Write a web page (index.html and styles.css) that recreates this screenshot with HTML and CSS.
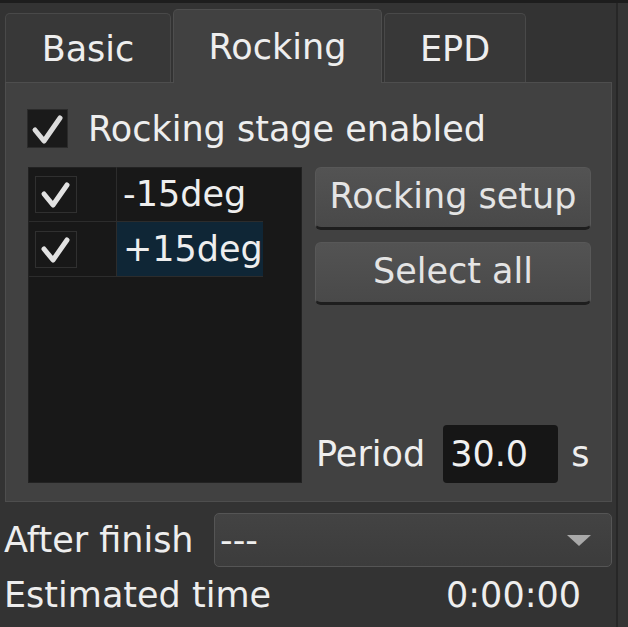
FILE: index.html
```html
<!DOCTYPE html>
<html>
<head>
<meta charset="utf-8">
<link rel="stylesheet" href="styles.css">
</head>
<body>
<div class="window">
  <div class="main">
    <div class="tabs">
      <div class="tab tab-basic">Basic</div>
      <div class="tab tab-rocking active">Rocking</div>
      <div class="tab tab-epd">EPD</div>
    </div>
    <div class="pane">
      <div class="check-row">
        <span class="checkbox big">
          <svg width="41" height="39" viewBox="0 0 41 39"><path d="M8 21 L17 32 L33 9" fill="none" stroke="#dcdcdc" stroke-width="5" stroke-linecap="round" stroke-linejoin="round"/></svg>
        </span>
        <span class="check-label">Rocking stage enabled</span>
      </div>
      <div class="pane-body">
        <div class="list">
          <div class="row">
            <div class="cell cell-check">
              <span class="checkbox small">
                <svg width="41" height="37" viewBox="0 0 41 37"><path d="M9 18 L18 29 L32 9" fill="none" stroke="#e2e2e2" stroke-width="5" stroke-linecap="round" stroke-linejoin="round"/></svg>
              </span>
            </div>
            <div class="cell cell-text">-15deg</div>
          </div>
          <div class="row">
            <div class="cell cell-check">
              <span class="checkbox small">
                <svg width="41" height="37" viewBox="0 0 41 37"><path d="M9 18 L18 29 L32 9" fill="none" stroke="#e2e2e2" stroke-width="5" stroke-linecap="round" stroke-linejoin="round"/></svg>
              </span>
            </div>
            <div class="cell cell-text selected">+15deg</div>
          </div>
        </div>
        <div class="side">
          <div class="button">Rocking setup</div>
          <div class="button">Select all</div>
          <div class="period">
            <span class="period-label">Period</span>
            <span class="input">30.0</span>
            <span class="unit">s</span>
          </div>
        </div>
      </div>
    </div>
    <div class="form-row finish-row">
      <span class="form-label">After finish</span>
      <div class="combo">
        <span class="combo-text">---</span>
        <span class="combo-arrow"></span>
      </div>
    </div>
    <div class="form-row time-row">
      <span class="form-label">Estimated time</span>
      <span class="time-value">0:00:00</span>
    </div>
  </div>
  <div class="right-strip"></div>
</div>
</body>
</html>
```

FILE: styles.css
```css
* { box-sizing: border-box; }
html, body {
  margin: 0;
  padding: 0;
  background: #333333;
}
body {
  font-family: "DejaVu Sans", "Liberation Sans", sans-serif;
  font-size: 35px;
  color: #eeeeee;
}
.window {
  width: 628px;
  height: 627px;
  display: flex;
  border-top: 3px solid #1d1d1d;
  background: #333333;
  overflow: hidden;
}
.main {
  width: 616px;
  padding: 0 4px 0 5px;
  display: flex;
  flex-direction: column;
}
.right-strip {
  flex: 1;
  border-left: 2px solid #272727;
  background: #353535;
}
.tabs {
  margin-top: 6px;
  height: 73px;
  display: flex;
  align-items: flex-end;
  gap: 2px;
}
.tab {
  height: 69px;
  display: flex;
  align-items: center;
  justify-content: center;
  padding-top: 2px;
  line-height: 40px;
  background: #383838;
  border: 1px solid #494949;
  border-bottom: none;
  border-radius: 5px 5px 0 0;
}
.tab-basic { width: 166px; }
.tab-rocking { width: 209px; }
.tab-epd { width: 142px; }
.tab.active {
  height: 74px;
  margin-bottom: -1px;
  padding-top: 0;
  background: #414141;
  border-color: #4e4e4e;
  position: relative;
  z-index: 1;
}
.pane {
  height: 420px;
  background: #414141;
  border: 1px solid #4e4e4e;
  padding: 26px 20px 18px 21px;
  display: flex;
  flex-direction: column;
}
.check-row {
  height: 39px;
  display: flex;
  align-items: center;
  gap: 20px;
  line-height: 40px;
}
.checkbox {
  display: block;
  background: #1a1a1a;
  border: 1px solid #2b2b2b;
}
.checkbox svg { display: block; }
.checkbox.big { width: 41px; height: 39px; }
.checkbox.big svg { margin: -1px; }
.checkbox.small { width: 42px; height: 37px; border-color: #303030; background: #181818; }
.checkbox.small svg { margin: -1px; }
.pane-body {
  margin-top: 19px;
  height: 316px;
  display: flex;
  gap: 13px;
  padding-left: 1px;
}
.list {
  width: 274px;
  height: 316px;
  background: #181818;
  border: 1px solid #222222;
}
.row {
  width: 234px;
  height: 55px;
  display: flex;
  border-bottom: 1px solid #2c2c2c;
}
.row:first-child { margin-top: -1px; }
.cell {
  height: 100%;
  display: flex;
  align-items: center;
  line-height: 40px;
}
.cell-check {
  width: 88px;
  padding-left: 6px;
  border-right: 1px solid #2c2c2c;
}
.cell-text {
  width: 146px;
  padding-left: 6px;
}
.cell-text.selected {
  background: #0f2636;
}
.side {
  width: 276px;
  display: flex;
  flex-direction: column;
  gap: 12px;
}
.button {
  height: 63px;
  display: flex;
  align-items: center;
  justify-content: center;
  padding-bottom: 4px;
  line-height: 40px;
  color: #e4e4e4;
  background: linear-gradient(#535353, #494949);
  border: 1px solid #585858;
  border-bottom: 3px solid #1e1e1e;
  border-radius: 6px;
}
.period {
  margin-top: auto;
  height: 58px;
  display: flex;
  align-items: center;
  padding-left: 1px;
  line-height: 40px;
}
.period-label { margin-right: 18px; }
.input {
  width: 115px;
  height: 58px;
  display: flex;
  align-items: center;
  padding-left: 7px;
  background: #161616;
  border-radius: 4px;
  color: #f0f0f0;
}
.unit { margin-left: 13px; }
.form-row {
  display: flex;
  align-items: center;
  line-height: 40px;
  margin-left: -1px;
}
.finish-row {
  margin-top: 11px;
  height: 54px;
}
.finish-row .form-label { width: 210px; }
.combo {
  flex: 1;
  height: 54px;
  display: flex;
  align-items: center;
  justify-content: space-between;
  padding: 0 20px 0 5px;
  background: linear-gradient(#434343, #3c3c3c);
  border: 1px solid #555555;
  border-radius: 5px;
}
.combo-arrow {
  width: 0;
  height: 0;
  border-left: 12px solid transparent;
  border-right: 12px solid transparent;
  border-top: 11px solid #a9a9a9;
}
.time-row {
  margin-top: 8px;
  height: 40px;
  justify-content: space-between;
  padding-right: 31px;
}
```
